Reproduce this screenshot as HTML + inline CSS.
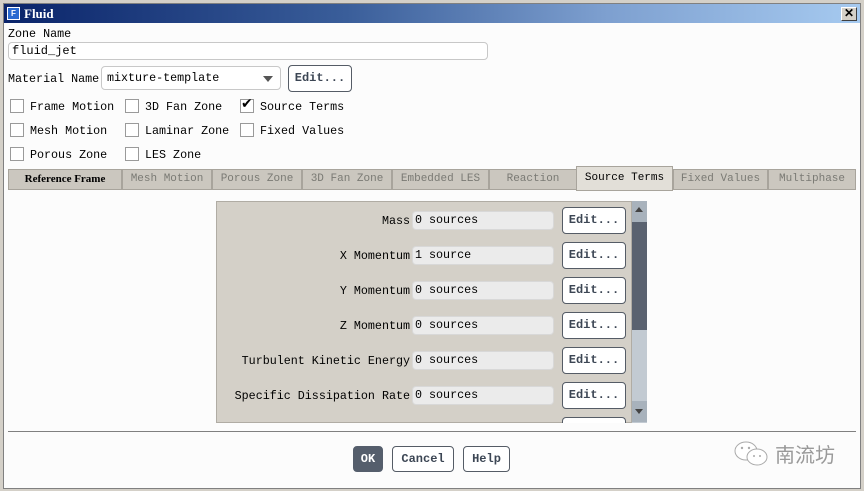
<!DOCTYPE html>
<html><head><meta charset="utf-8"><style>
*{box-sizing:border-box;margin:0;padding:0}
body{width:864px;height:491px;background:#d4d0c8;position:relative;overflow:hidden;font-family:"Liberation Mono",monospace;font-size:11.7px;color:#000}
.a{position:absolute}
.win{left:3px;top:3px;width:858px;height:486px;background:#fcfcfc;border:1px solid #808080}
.title{left:4px;top:4px;width:856px;height:19px;background:linear-gradient(90deg,#0a246a,#3a5e9a 40%,#7d9fcf 70%,#a6caf0);color:#fff;font-weight:bold;font-family:"Liberation Serif",serif;font-size:13px}
.cb{width:14px;height:14px;border:1px solid #9a9a9a;background:#fff}
.t{white-space:pre;line-height:14px}
.btn{border:1px solid #555c66;border-radius:4px;background:#fff;font-weight:bold;color:#3c4654;text-align:center}
.tab{top:169px;height:21px;background:#cbc7bf;border:1px solid #a8a49c;color:#7a7a74;font-size:11px;text-align:center;line-height:19px;white-space:pre}
.fld{left:412px;width:142px;height:19px;background:#ebebeb;border:1px solid #d8d8d8;border-radius:4px;padding-left:2px;line-height:17px}
.lbl{right:454px;text-align:right;white-space:pre}
.eb{left:562px;width:64px;height:27px;line-height:25px;font-size:12px}
</style></head><body>
<div class="a win"></div>
<div class="a title"><span class="a" style="left:3px;top:3px;width:13px;height:13px;background:#2a6ad0;border:1px solid #fff;font-size:8px;line-height:11px;text-align:center;font-family:'Liberation Sans'">F</span><span class="a" style="left:20px;top:2px">Fluid</span>
<span class="a" style="right:3px;top:3px;width:16px;height:14px;background:#d4d0c8;border:1px solid;border-color:#fff #404040 #404040 #fff;color:#000;font-size:12px;line-height:11px;text-align:center;font-family:'Liberation Sans'">✕</span></div>

<div class="a t" style="left:8px;top:27px">Zone Name</div>
<div class="a" style="left:8px;top:42px;width:480px;height:18px;border:1px solid #c8c8c8;border-radius:4px;background:#fff;padding-left:3px;line-height:16px;font-size:12px">fluid_jet</div>
<div class="a t" style="left:8px;top:72px">Material Name</div>
<div class="a" style="left:101px;top:66px;width:180px;height:24px;border:1px solid #c8c8c8;border-radius:4px;background:#fff;padding-left:5px;line-height:22px">mixture-template<span class="a" style="left:161px;top:9px;border:5px solid transparent;border-top:6px solid #555;border-bottom:0"></span></div>
<div class="a btn" style="left:288px;top:65px;width:64px;height:27px;line-height:25px;font-size:12px">Edit...</div>

<div class="a cb" style="left:10px;top:99px"></div><div class="a t" style="left:30px;top:100px">Frame Motion</div>
<div class="a cb" style="left:125px;top:99px"></div><div class="a t" style="left:145px;top:100px">3D Fan Zone</div>
<div class="a cb" style="left:240px;top:99px"></div><div class="a" style="left:241px;top:96px;font-size:14px;font-family:'DejaVu Sans'">✔</div><div class="a t" style="left:260px;top:100px">Source Terms</div>
<div class="a cb" style="left:10px;top:123px"></div><div class="a t" style="left:30px;top:124px">Mesh Motion</div>
<div class="a cb" style="left:125px;top:123px"></div><div class="a t" style="left:145px;top:124px">Laminar Zone</div>
<div class="a cb" style="left:240px;top:123px"></div><div class="a t" style="left:260px;top:124px">Fixed Values</div>
<div class="a cb" style="left:10px;top:147px"></div><div class="a t" style="left:30px;top:148px">Porous Zone</div>
<div class="a cb" style="left:125px;top:147px"></div><div class="a t" style="left:145px;top:148px">LES Zone</div>

<div class="a tab" style="left:8px;width:114px;color:#000;font-weight:bold;font-family:'Liberation Serif'">Reference Frame</div>
<div class="a tab" style="left:122px;width:90px">Mesh Motion</div>
<div class="a tab" style="left:212px;width:90px">Porous Zone</div>
<div class="a tab" style="left:302px;width:90px">3D Fan Zone</div>
<div class="a tab" style="left:392px;width:97px">Embedded LES</div>
<div class="a tab" style="left:489px;width:88px">Reaction</div>
<div class="a tab" style="left:576px;top:166px;height:25px;width:97px;background:#e2dfd8;color:#000;line-height:23px">Source Terms</div>
<div class="a tab" style="left:673px;width:95px">Fixed Values</div>
<div class="a tab" style="left:768px;width:88px">Multiphase</div>

<div class="a" style="left:216px;top:201px;width:416px;height:222px;background:#d4d0c8;border:1px solid #b0aca4;overflow:hidden">
</div>
<div class="a" style="left:632px;top:201px;width:15px;height:222px;background:#c2cad2"></div>
<div class="a" style="left:632px;top:201px;width:15px;height:21px;background:#a8b2bc"></div>
<div class="a" style="left:635px;top:207px;border:4px solid transparent;border-bottom:5px solid #444;border-top:0"></div>
<div class="a" style="left:632px;top:222px;width:15px;height:108px;background:#5a6270"></div>
<div class="a" style="left:632px;top:401px;width:15px;height:21px;background:#a8b2bc"></div>
<div class="a" style="left:635px;top:409px;border:4px solid transparent;border-top:5px solid #444;border-bottom:0"></div>

<div class="a t lbl" style="top:214px">Mass</div><div class="a fld" style="top:211px">0 sources</div><div class="a btn eb" style="top:207px">Edit...</div>
<div class="a t lbl" style="top:249px">X Momentum</div><div class="a fld" style="top:246px">1 source</div><div class="a btn eb" style="top:242px">Edit...</div>
<div class="a t lbl" style="top:284px">Y Momentum</div><div class="a fld" style="top:281px">0 sources</div><div class="a btn eb" style="top:277px">Edit...</div>
<div class="a t lbl" style="top:319px">Z Momentum</div><div class="a fld" style="top:316px">0 sources</div><div class="a btn eb" style="top:312px">Edit...</div>
<div class="a t lbl" style="top:354px">Turbulent Kinetic Energy</div><div class="a fld" style="top:351px">0 sources</div><div class="a btn eb" style="top:347px">Edit...</div>
<div class="a t lbl" style="top:389px">Specific Dissipation Rate</div><div class="a fld" style="top:386px">0 sources</div><div class="a btn eb" style="top:382px">Edit...</div>
<div class="a btn" style="left:562px;top:417px;width:64px;height:6px;border-bottom:0;border-radius:4px 4px 0 0"></div>

<div class="a" style="left:8px;top:431px;width:848px;height:1px;background:#808080"></div>
<div class="a btn" style="left:353px;top:446px;width:30px;height:26px;line-height:24px;background:#555e6c;color:#fff;border-color:#555e6c;font-size:12px">OK</div>
<div class="a btn" style="left:392px;top:446px;width:62px;height:26px;line-height:24px;font-size:12px">Cancel</div>
<div class="a btn" style="left:463px;top:446px;width:47px;height:26px;line-height:24px;font-size:12px">Help</div>
<svg class="a" style="left:732px;top:440px" width="40" height="28" viewBox="0 0 40 28"><g fill="#fff" stroke="#aaa" stroke-width="1"><ellipse cx="14" cy="11" rx="11" ry="9"/><ellipse cx="25" cy="17" rx="10" ry="8"/></g><g fill="#aaa"><circle cx="10" cy="8" r="1.2"/><circle cx="17" cy="8" r="1.2"/><circle cx="22" cy="16" r="1"/><circle cx="28" cy="16" r="1"/></g></svg>
<div class="a" style="left:775px;top:442px;color:#999;font-size:20px;font-family:'Noto Sans CJK SC',sans-serif;line-height:24px">南流坊</div>
</body></html>
